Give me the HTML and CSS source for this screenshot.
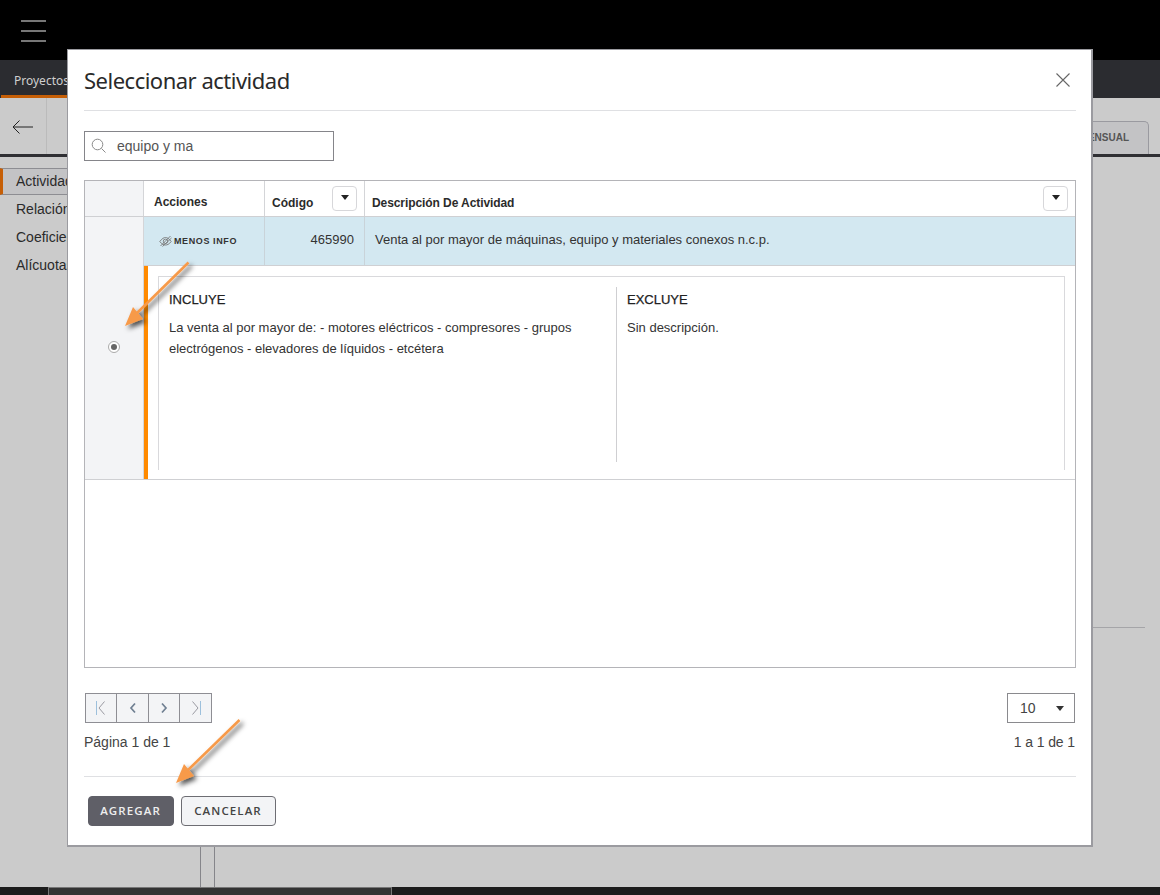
FILE: index.html
```html
<!DOCTYPE html>
<html lang="es">
<head>
<meta charset="utf-8">
<title>Seleccionar actividad</title>
<link rel="stylesheet" href="styles.css">
</head>
<body>
<div class="page">
  <header class="topbar">
    <div class="burger"><span></span><span></span><span></span></div>
  </header>
  <nav class="tabbar"><div class="tab">Proyectos</div></nav>
  <div class="toolbar">
    <div class="back">
      <svg width="24" height="16" viewBox="0 0 24 16"><path d="M22 8H2M8.500 1.500 2 8l6.500 6.500" fill="none" stroke="#222" stroke-width="1"/></svg>
    </div>
    <div class="toolfill"></div>
    <div class="mensual">MENSUAL</div>
  </div>
  <div class="main">
    <aside class="side">
      <div class="side-item active">Actividades</div>
      <div class="side-item">Relación</div>
      <div class="side-item">Coeficientes</div>
      <div class="side-item">Alícuotas</div>
    </aside>
    <div class="content">
      <div class="rule-right"></div>
    </div>
  </div>
  <div class="stems"><span></span><span></span></div>
  <footer class="bottom"><div class="bottom-box"></div></footer>
</div>

<section class="modal">
  <div class="modal-head">
    <h1>Seleccionar actividad</h1>
    <svg class="close" width="16" height="16" viewBox="0 0 16 16"><path d="M1.500 1.500l13 13M14.500 1.500l-13 13" stroke="#666" stroke-width="1.100" fill="none"/></svg>
  </div>
  <div class="search">
    <svg width="16" height="16" viewBox="0 0 16 16"><circle cx="6.500" cy="6.500" r="5.300" fill="none" stroke="#8a8a8a"/><path d="M10.500 10.500 14.500 14.500" stroke="#8a8a8a"/></svg>
    <span>equipo y ma</span>
  </div>
  <div class="table">
    <div class="thead">
      <div class="th-blank"></div>
      <div class="th th-acc">Acciones</div>
      <div class="th th-cod">Código<button class="filter"><i></i></button></div>
      <div class="th th-desc">Descripción De Actividad<button class="filter"><i></i></button></div>
    </div>
    <div class="rowgroup">
      <div class="radio-cell"><span class="radio"><b></b></span></div>
      <div class="row-main">
        <div class="row">
          <div class="td td-acc">
            <svg width="13" height="12" viewBox="0 0 13 12"><g fill="none" stroke="#777" stroke-width=".9"><path d="M.8 6.500C3 3.500 5 2.500 6.500 2.500s3.500 1 5.700 4c-2.200 3-4.200 3.500-5.700 3.500S3 9.500.8 6.500z"/><circle cx="6.500" cy="6.300" r="2.200"/><path d="M1.500 11 11.500 1M3.500 11.500 12.500 3"/></g></svg>
            <span>MENOS INFO</span>
          </div>
          <div class="td td-cod">465990</div>
          <div class="td td-desc">Venta al por mayor de máquinas, equipo y materiales conexos n.c.p.</div>
        </div>
        <div class="detail">
          <div class="detail-box">
            <div class="detail-col inc">
              <h2>INCLUYE</h2>
              <p>La venta al por mayor de: - motores eléctricos - compresores - grupos electrógenos - elevadores de líquidos - etcétera</p>
            </div>
            <div class="detail-col exc">
              <h2>EXCLUYE</h2>
              <p>Sin descripción.</p>
            </div>
          </div>
        </div>
      </div>
    </div>
  </div>
  <div class="pager">
    <div class="pager-left">
      <div class="pages">
        <button><svg width="14" height="16" viewBox="0 0 14 16"><path d="M2.500 1v14" stroke="#9dc0dc" fill="none"/><path d="M10.500 1.500 5 8l5.500 6.500" stroke="#9a9aa2" fill="none"/></svg></button>
        <button><svg width="10" height="12" viewBox="0 0 10 12"><path d="M7 1.500 3 6l4 4.500" stroke="#6f7f92" stroke-width="1.700" fill="none"/></svg></button>
        <button><svg width="10" height="12" viewBox="0 0 10 12"><path d="M3 1.500 7 6l-4 4.500" stroke="#6f7f92" stroke-width="1.700" fill="none"/></svg></button>
        <button><svg width="14" height="16" viewBox="0 0 14 16"><path d="M11.500 1v14" stroke="#9dc0dc" fill="none"/><path d="M3.500 1.500 9 8l-5.500 6.500" stroke="#9a9aa2" fill="none"/></svg></button>
      </div>
      <div class="pager-text">Página 1 de 1</div>
    </div>
    <div class="pager-right">
      <div class="size"><span>10</span><i></i></div>
      <div class="pager-text tight">1 a 1 de 1</div>
    </div>
  </div>
  <div class="actions">
    <button class="btn primary">AGREGAR</button>
    <button class="btn secondary">CANCELAR</button>
  </div>
</section>

<svg class="arrows" width="1160" height="895" viewBox="0 0 1160 895">
  <defs>
    <filter id="sh" x="-40%" y="-40%" width="180%" height="180%"><feDropShadow dx="3" dy="3" stdDeviation="2.500" flood-color="#000" flood-opacity=".7"/></filter>
  </defs>
  <g filter="url(#sh)" fill="#f79a4a" stroke="none">
    <path d="M188.500 262.500 136 314" stroke="#f79a4a" stroke-width="2.600"/>
    <path d="M125 326 133 307 143 319z"/>
    <path d="M239.500 720 187 771" stroke="#f79a4a" stroke-width="2.600"/>
    <path d="M176 783 184 764 194 776z"/>
  </g>
</svg>
</body>
</html>
```
FILE: styles.css
```css
* { box-sizing: border-box; }
html, body { margin: 0; padding: 0; height: 895px; overflow: hidden; }
body { font-family: "Liberation Sans", Arial, sans-serif; background: #cbcbcb; color: #222; position: relative; }

.page { height: 895px; display: flex; flex-direction: column; }
.topbar { height: 60px; background: #000; padding: 20px 0 0 21px; flex: none; }
.burger { display: flex; flex-direction: column; gap: 8px; width: 25px; }
.burger span { height: 2px; background: #777; display: block; }
.tabbar { height: 38px; background: #2b2c30; flex: none; }
.tab { width: 80px; height: 38px; padding: 12px 0 0 13px; font: 400 12px "Noto Sans", sans-serif; color: #cfcfcf; border-bottom: 3px solid #c65f07; margin-left: 1px; white-space: nowrap; }
.toolbar { height: 59px; display: flex; border-bottom: 3px solid #2f2f33; flex: none; }
.back { width: 47px; border-right: 1px solid #bbb; padding: 21px 0 0 11px; }
.toolfill { flex: 1; }
.mensual { width: 100px; margin: 23px 11px 0 0; height: 33px; border: 1px solid #9a9aa0; border-bottom: 0; border-radius: 0 5px 0 0; background: #c3c3c5; font-size: 10px; font-weight: 700; color: #555; padding: 10px 19px 0 0; text-align: right; }
.main { flex: 1; display: flex; min-height: 0; }
.side { width: 200px; padding-top: 11px; flex: none; }
.side-item { height: 28px; line-height: 28px; padding-left: 16px; font-size: 14px; color: #2a2a2a; white-space: nowrap; }
.side-item.active { height: 27px; background: #c3c3c5; border: 1px solid #8d8d92; border-left: 3px solid #c65f07; border-right: 0; padding-left: 13px; line-height: 25px; }
.content { flex: 1; position: relative; }
.rule-right { height: 1px; background: #a5a5a8; margin-top: 470px; margin-right: 15px; }
.stems { height: 40px; display: flex; gap: 13px; padding-left: 200px; flex: none; }
.stems span { width: 1px; background: #85858a; }
.bottom { height: 8px; background: #1c1c1c; flex: none; padding-left: 48px; }
.bottom-box { width: 344px; height: 8px; background: #333; border: 1px solid #777; border-bottom: 0; }

.modal { position: absolute; left: 67px; top: 49px; width: 1026px; height: 798px; background: #fff; border: 1px solid #9b9ba0; border-width: 1px 2px 2px 1px; padding: 0 15px 0 16px; display: flex; flex-direction: column; }
.modal-head { height: 61px; border-bottom: 1px solid #dfe0e3; display: flex; align-items: center; justify-content: space-between; padding: 0 5px 0 0; flex: none; }
.modal-head h1 { margin: 0; font: 400 22px "Noto Sans", "Open Sans", sans-serif; color: #2a2a2a; letter-spacing: -.5px; }
.search { width: 250px; height: 30px; margin-top: 20px; border: 1px solid #85858a; display: flex; align-items: center; gap: 10px; padding-left: 6px; font-size: 14px; color: #555; flex: none; }

.table { height: 488px; margin-top: 19px; border: 1px solid #b4b4b8; flex: none; }
.thead { height: 36px; display: grid; grid-template-columns: 59px 121px 100px 1fr; border-bottom: 1px solid #cfd0d3; }
.th-blank { background: #f3f4f6; border-right: 1px solid #d4d5d8; }
.th { font-size: 12px; font-weight: 700; color: #2b2b2b; position: relative; border-right: 1px solid #d4d5d8; }
.th-acc { padding: 14px 0 0 10px; }
.th-cod { padding: 15px 0 0 7px; }
.th-desc { padding: 15px 0 0 7px; border-right: 0; letter-spacing: -.08px; }
.filter { position: absolute; top: 5px; right: 7px; width: 25px; height: 25px; padding: 0; background: #fff; border: 1px solid #d7d7da; border-radius: 4px; display: flex; justify-content: center; padding-top: 8px; }
.filter i, .size i { display: block; width: 0; height: 0; border-left: 4.500px solid transparent; border-right: 4.500px solid transparent; border-top: 5px solid #222; }
.rowgroup { height: 263px; display: flex; border-bottom: 1px solid #cfd0d3; }
.radio-cell { width: 59px; background: #f3f4f6; border-right: 1px solid #d4d5d8; display: flex; align-items: center; justify-content: center; flex: none; }
.radio-cell .radio { position: relative; top: -1px; width: 12px; height: 12px; border-radius: 50%; border: 1px solid #aaa; background: #fff; display: flex; align-items: center; justify-content: center; }
.radio b { width: 6px; height: 6px; border-radius: 50%; background: #666; display: block; }
.row-main { flex: 1; display: flex; flex-direction: column; min-width: 0; }
.row { height: 49px; display: grid; grid-template-columns: 121px 100px 1fr; background: #d3e8f1; border-bottom: 1px solid #cfd0d3; flex: none; }
.td { font-size: 13px; color: #333; line-height: 46px; border-right: 1px solid #c9d3d9; }
.td-acc { display: flex; align-items: center; gap: 2px; padding-left: 15px; font-size: 9px; font-weight: 700; letter-spacing: .6px; color: #333; line-height: normal; }
.td-cod { text-align: right; padding-right: 10px; }
.td-desc { padding-left: 10px; border-right: 0; }
.detail { flex: 1; border-left: 4px solid #ff8a00; padding: 10px 10px 9px 10px; min-height: 0; }
.detail-box { height: 100%; border: 1px solid #d9d9dc; border-bottom: 0; display: flex; padding-top: 10px; }
.detail-col { height: 175px; padding: 5px 10px 0; }
.detail-col.inc { width: 458px; border-right: 1px solid #cfcfd2; padding-right: 30px; }
.detail-col h2 { margin: 0 0 10px; font-size: 13px; font-weight: 400; color: #222; -webkit-text-stroke: .25px #222; }
.detail-col p { margin: 0; font-size: 13px; line-height: 21px; color: #333; }

.pager { display: flex; justify-content: space-between; margin-top: 25px; padding: 0 1px; flex: none; }
.pages { display: grid; grid-template-columns: 31px 32px 31px 1fr; width: 127px; height: 30px; border: 1px solid #8e8e94; }
.pages button { padding: 0; margin: 0; border: 0; border-right: 1px solid #8e8e94; background: #f3f4f6; display: flex; align-items: center; justify-content: center; }
.pages button:last-child { border-right: 0; }
.pager-text { font-size: 14px; color: #444; margin-top: 11px; line-height: 16px; }
.pager-text.tight { letter-spacing: -.1px; }
.pager-left .pager-text { margin-left: -1px; }
.pager-right { display: flex; flex-direction: column; align-items: flex-end; }
.size { width: 68px; height: 30px; border: 1px solid #8a8a8e; display: flex; align-items: center; justify-content: space-between; padding: 0 10px 0 12px; font-size: 14px; color: #444; }
.size i { border-top-color: #333; }
.actions { margin-top: 26px; border-top: 1px solid #dfe0e3; padding: 19px 0 0 4px; display: flex; gap: 7px; flex: none; }
.btn { height: 30px; border-radius: 4px; font: 600 11.500px "Open Sans", "Noto Sans", sans-serif; letter-spacing: 1.100px; padding: 0 1px 2px 0; }
.btn.primary { width: 86px; background: #5f5f67; border: 1px solid #5f5f67; color: #eee; }
.btn.secondary { width: 95px; background: #f3f4f6; border: 1px solid #6d6d73; color: #444; }

.arrows { position: absolute; left: 0; top: 0; pointer-events: none; }
```
